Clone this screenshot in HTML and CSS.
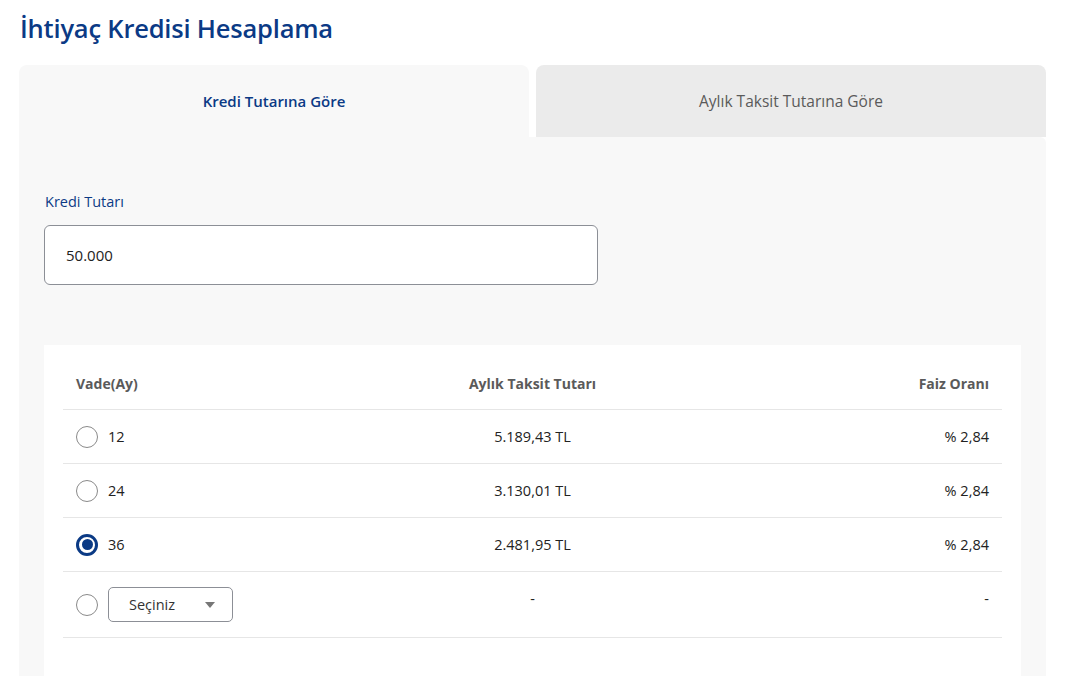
FILE: index.html
```html
<!DOCTYPE html>
<html lang="tr">
<head>
<meta charset="utf-8">
<title>İhtiyaç Kredisi Hesaplama</title>
<link rel="stylesheet" href="styles.css">
</head>
<body>
<div class="page">
  <h1 class="title">İhtiyaç Kredisi Hesaplama</h1>
  <div class="tabs">
    <div class="tab tab-active">Kredi Tutarına Göre</div>
    <div class="tab tab-inactive">Aylık Taksit Tutarına Göre</div>
  </div>
  <div class="panel">
    <label class="field-label">Kredi Tutarı</label>
    <div class="input">50.000</div>
    <div class="card">
      <div class="row head">
        <div class="cell c1">Vade(Ay)</div>
        <div class="cell c2">Aylık Taksit Tutarı</div>
        <div class="cell c3">Faiz Oranı</div>
      </div>
      <div class="row">
        <div class="cell c1"><span class="radio"></span><span>12</span></div>
        <div class="cell c2">5.189,43 TL</div>
        <div class="cell c3">% 2,84</div>
      </div>
      <div class="row">
        <div class="cell c1"><span class="radio"></span><span>24</span></div>
        <div class="cell c2">3.130,01 TL</div>
        <div class="cell c3">% 2,84</div>
      </div>
      <div class="row">
        <div class="cell c1"><span class="radio checked"></span><span>36</span></div>
        <div class="cell c2">2.481,95 TL</div>
        <div class="cell c3">% 2,84</div>
      </div>
      <div class="row last">
        <div class="cell c1"><span class="radio"></span><span class="select">Seçiniz<span class="caret"></span></span></div>
        <div class="cell c2 top">-</div>
        <div class="cell c3 top">-</div>
      </div>
    </div>
  </div>
</div>
</body>
</html>
```
FILE: styles.css
```css
* { box-sizing: border-box; }
html, body { margin: 0; padding: 0; background: #fff; overflow: hidden; }
body { font-family: "Open Sans", "Noto Sans", sans-serif; color: #222; }
.page { padding: 0 21px 0 19px; height: 676px; overflow: hidden; }
.title {
  margin: 0; padding: 12px 0 0 1px;
  font-size: 25.5px; line-height: 32px; font-weight: 600;
  color: #0b3a85; letter-spacing: -0.2px;
  height: 65px;
}
.tabs { display: flex; gap: 7px; }
.tab {
  flex: 1; height: 72px; display: flex; align-items: center; justify-content: center;
  border-radius: 8px 8px 0 0; font-size: 15.5px;
}
.tab-active { background: #f8f8f8; color: #0b3a85; font-weight: 600; font-size: 15px; }
.tab-inactive { background: #ebebeb; color: #5a5a5a; }
.panel { background: #f8f8f8; padding: 55px 25px 0 25px; height: 539px; border-radius: 0 6px 0 0; }
.field-label { display: block; font-size: 14.5px; line-height: 20px; color: #0b3a85; padding-left: 1px; }
.input {
  margin-top: 13px; width: 554px; height: 60px; background: #fff;
  border: 1px solid #8c8f96; border-radius: 6px;
  display: flex; align-items: center; padding-left: 21px;
  font-size: 15px; color: #222;
}
.card { margin-top: 60px; background: #fff; padding: 12px 19px 0 19px; height: 331px; }
.row { display: grid; grid-template-columns: 1fr 1fr 1fr; height: 54px; border-bottom: 1px solid #e6e6e6; align-items: center; }
.row.head { height: 53px; font-weight: 700; color: #5a5a5a; font-size: 14px; }
.row.last { height: 66px; }
.cell { padding: 0 13px; font-size: 14.5px; }
.head .cell { font-size: 14px; }
.c1 { display: flex; align-items: center; gap: 10px; }
.c2 { text-align: center; }
.c3 { text-align: right; }
.top { align-self: start; padding-top: 17px; }
.radio {
  width: 22px; height: 22px; border-radius: 50%; border: 1px solid #8a8a8a; background: #fff;
  flex: none; display: flex; align-items: center; justify-content: center;
}
.radio.checked { border: 3px solid #0b3a85; }
.radio.checked::after { content: ""; width: 11px; height: 11px; border-radius: 50%; background: #0b3a85; }
.select {
  width: 125px; height: 35px; border: 1px solid #8c8f96; border-radius: 5px;
  display: flex; align-items: center; padding-left: 20px; position: relative; color: #333;
}
.caret {
  position: absolute; left: 96px; top: 14px;
  width: 0; height: 0; border-left: 5px solid transparent; border-right: 5px solid transparent; border-top: 6px solid #777;
}
```
